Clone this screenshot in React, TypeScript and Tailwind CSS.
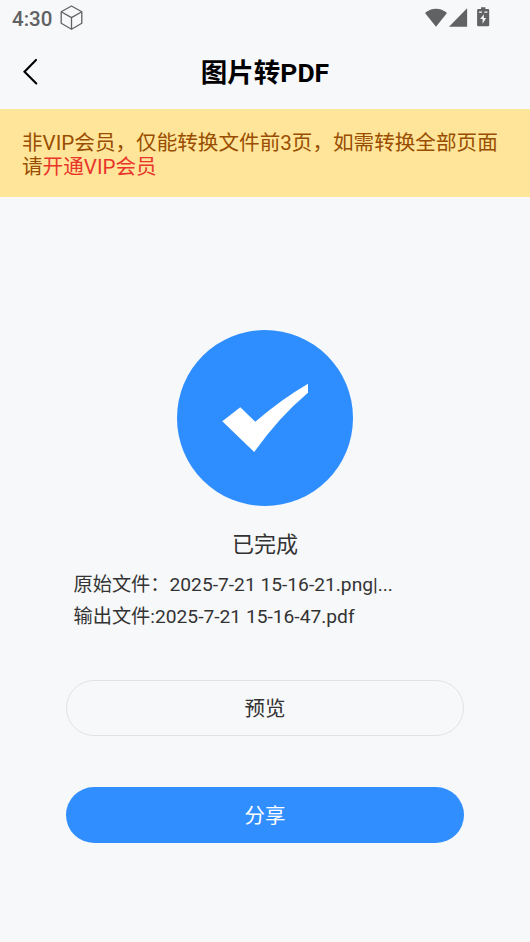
import { ReactNode } from 'react'

const FONT = "font-[Roboto,'Noto_Sans_CJK_SC',sans-serif]"

function StatusBar() {
    return (
        <div className="flex h-9 items-center justify-between pl-3 pr-10 text-[#616264]">
            <div className="flex items-center gap-2">
                <span className="pt-px text-[20.5px] font-medium leading-6">4:30</span>
                {/* Cube notification icon */}
                <svg width="24" height="26" viewBox="0 0 24 26" fill="none" stroke="currentColor" strokeWidth="1.3" strokeLinejoin="round">
                    <path d="M11.5 1L21.8 6.8V18.3L11.5 24.2L1.2 18.3V6.8Z" />
                    <path d="M1.2 6.8L11.5 12.6L21.8 6.8M11.5 12.6V24.2" />
                </svg>
            </div>
            <div className="flex items-center">
                {/* Wifi */}
                <svg width="22" height="20" viewBox="0 0 22 20" fill="currentColor">
                    <path d="M0 5C6.2 -0.8 15.8 -0.8 22 5L11 18.7Z" />
                </svg>
                {/* Cell signal */}
                <svg className="ml-0.5" width="19" height="20" viewBox="0 0 19 20" fill="currentColor">
                    <path d="M18.1 0.3V18.7H0Z" />
                </svg>
                {/* Charging battery */}
                <svg className="ml-[9px] overflow-visible" width="13" height="20" viewBox="0 0 13 20" fill="currentColor">
                    <path fillRule="evenodd" d="M4 -0.7H8.4V1.1H11Q12.2 1.1 12.2 2.3V17Q12.2 18.2 11 18.2H1.3Q0.1 18.2 0.1 17V2.3Q0.1 1.1 1.3 1.1H4ZM6.8 6.3L3.2 11.1H5.6V15.8L9.2 10.1H6.8Z" />
                    <path d="M2 4.1H5M7.4 4.1H10.4" stroke="#f7f8fa" strokeWidth="1.3" />
                </svg>
            </div>
        </div>
    )
}

function Header({ title }: { title: string }) {
    return (
        <header className="grid h-[73px] grid-cols-[60px_1fr_60px] items-center">
            <button className="flex justify-end pb-[3px] pr-5" aria-label="返回">
                <svg width="18" height="28" viewBox="0 0 18 28" fill="none" stroke="#000" strokeWidth="2.1" strokeLinecap="round">
                    <path d="M14 2.9L2.5 14.7L14.3 26.5" />
                </svg>
            </button>
            <h1 className="pt-px text-center text-[26.5px] font-bold leading-8 text-black">{title}</h1>
        </header>
    )
}

function PillButton({ children, primary = false }: { children: ReactNode, primary?: boolean }) {
    return (
        <button
            className={`flex h-14 w-full items-center justify-center rounded-full pt-0.5 text-[20.5px] leading-6
                ${primary ? 'bg-[#318eff] text-white' : 'border border-[#e1e2e5] text-[#333]'}`}
        >
            {children}
        </button>
    )
}

export default function App() {
    return (
        <div className={`flex h-[942px] w-[530px] flex-col overflow-hidden bg-[#f7f8fa] ${FONT}`}>
            <StatusBar />
            <Header title="图片转PDF" />

            {/* VIP notice */}
            <div className="h-[88px] bg-[#ffe599] pl-[22px] pt-[22px] text-[20.6px] leading-6 text-[#994d00]">
                <p className="whitespace-nowrap">非VIP会员，仅能转换文件前3页，如需转换全部页面</p>
                <p>请<span className="text-[#e8352b]">开通VIP会员</span></p>
            </div>

            <main className="flex flex-col items-center px-[66px] pt-[133px] text-[#333]">
                <svg width="176" height="176" viewBox="0 0 176 176">
                    <circle cx="88" cy="88" r="88" fill="#2e8eff" />
                    <path d="M45.3 91.3L63.3 77.3L78.3 91.7Q104 69.5 131 53.7V62.7Q102 87 77.2 122Z" fill="#fff" />
                </svg>
                <p className="mt-[25px] text-[22px] leading-7">已完成</p>
                <div className="mt-2.5 w-full pl-[7.5px] text-[19.22px] leading-8">
                    <p>原始文件：2025-7-21 15-16-21.png|...</p>
                    <p>输出文件:2025-7-21 15-16-47.pdf</p>
                </div>
                <div className="mt-[46.5px] flex w-full flex-col gap-[51.5px]">
                    <PillButton>预览</PillButton>
                    <PillButton primary>分享</PillButton>
                </div>
            </main>
        </div>
    )
}
